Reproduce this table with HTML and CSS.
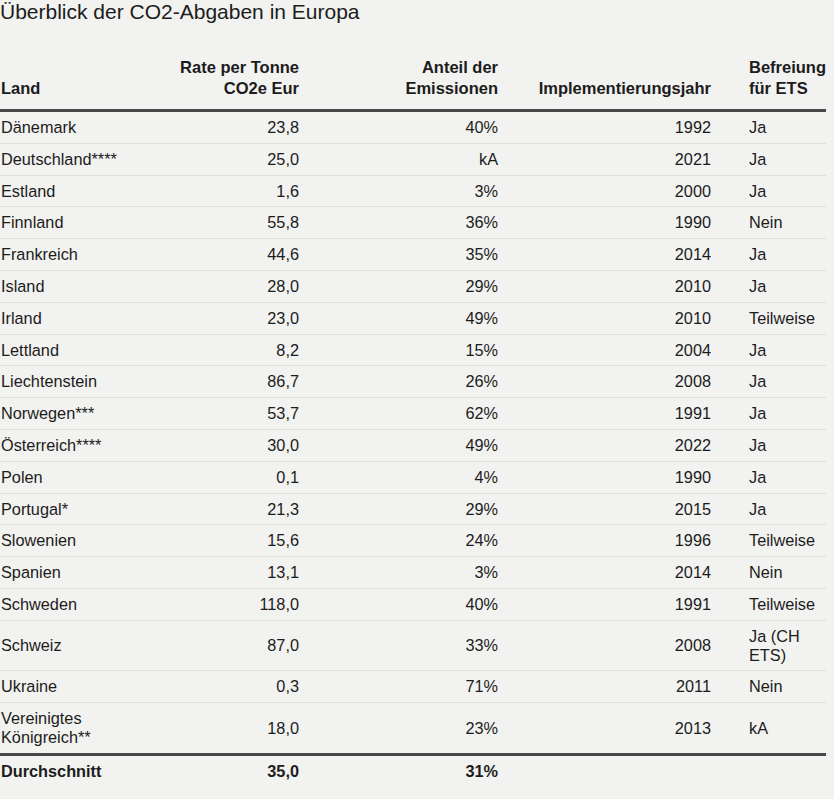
FILE: index.html
```html
<!DOCTYPE html>
<html lang="de">
<head>
<meta charset="utf-8">
<title>Überblick der CO2-Abgaben in Europa</title>
<link rel="stylesheet" href="styles.css">
</head>
<body>
<h1 class="title">Überblick der CO2-Abgaben in Europa</h1>
<table class="co2">
  <colgroup>
    <col class="c-land">
    <col class="c-rate">
    <col class="c-share">
    <col class="c-year">
    <col class="c-ets">
  </colgroup>
  <thead>
    <tr>
      <th class="land">Land</th>
      <th class="num rate">Rate per Tonne CO2e Eur</th>
      <th class="num share">Anteil der Emissionen</th>
      <th class="num year">Implementierungsjahr</th>
      <th class="ets">Befreiung für ETS</th>
    </tr>
  </thead>
  <tbody>
    <tr><td class="land">Dänemark</td><td class="num rate">23,8</td><td class="num share">40%</td><td class="num year">1992</td><td class="ets">Ja</td></tr>
    <tr><td class="land">Deutschland****</td><td class="num rate">25,0</td><td class="num share">kA</td><td class="num year">2021</td><td class="ets">Ja</td></tr>
    <tr><td class="land">Estland</td><td class="num rate">1,6</td><td class="num share">3%</td><td class="num year">2000</td><td class="ets">Ja</td></tr>
    <tr><td class="land">Finnland</td><td class="num rate">55,8</td><td class="num share">36%</td><td class="num year">1990</td><td class="ets">Nein</td></tr>
    <tr><td class="land">Frankreich</td><td class="num rate">44,6</td><td class="num share">35%</td><td class="num year">2014</td><td class="ets">Ja</td></tr>
    <tr><td class="land">Island</td><td class="num rate">28,0</td><td class="num share">29%</td><td class="num year">2010</td><td class="ets">Ja</td></tr>
    <tr><td class="land">Irland</td><td class="num rate">23,0</td><td class="num share">49%</td><td class="num year">2010</td><td class="ets">Teilweise</td></tr>
    <tr><td class="land">Lettland</td><td class="num rate">8,2</td><td class="num share">15%</td><td class="num year">2004</td><td class="ets">Ja</td></tr>
    <tr><td class="land">Liechtenstein</td><td class="num rate">86,7</td><td class="num share">26%</td><td class="num year">2008</td><td class="ets">Ja</td></tr>
    <tr><td class="land">Norwegen***</td><td class="num rate">53,7</td><td class="num share">62%</td><td class="num year">1991</td><td class="ets">Ja</td></tr>
    <tr><td class="land">Österreich****</td><td class="num rate">30,0</td><td class="num share">49%</td><td class="num year">2022</td><td class="ets">Ja</td></tr>
    <tr><td class="land">Polen</td><td class="num rate">0,1</td><td class="num share">4%</td><td class="num year">1990</td><td class="ets">Ja</td></tr>
    <tr><td class="land">Portugal*</td><td class="num rate">21,3</td><td class="num share">29%</td><td class="num year">2015</td><td class="ets">Ja</td></tr>
    <tr><td class="land">Slowenien</td><td class="num rate">15,6</td><td class="num share">24%</td><td class="num year">1996</td><td class="ets">Teilweise</td></tr>
    <tr><td class="land">Spanien</td><td class="num rate">13,1</td><td class="num share">3%</td><td class="num year">2014</td><td class="ets">Nein</td></tr>
    <tr><td class="land">Schweden</td><td class="num rate">118,0</td><td class="num share">40%</td><td class="num year">1991</td><td class="ets">Teilweise</td></tr>
    <tr><td class="land">Schweiz</td><td class="num rate">87,0</td><td class="num share">33%</td><td class="num year">2008</td><td class="ets">Ja (CH ETS)</td></tr>
    <tr><td class="land">Ukraine</td><td class="num rate">0,3</td><td class="num share">71%</td><td class="num year">2011</td><td class="ets">Nein</td></tr>
    <tr><td class="land">Vereinigtes Königreich**</td><td class="num rate">18,0</td><td class="num share">23%</td><td class="num year">2013</td><td class="ets">kA</td></tr>
  </tbody>
  <tfoot>
    <tr><td class="land">Durchschnitt</td><td class="num rate">35,0</td><td class="num share">31%</td><td class="num year"></td><td class="ets"></td></tr>
  </tfoot>
</table>
</body>
</html>
```

FILE: styles.css
```css
html, body {
  margin: 0;
  padding: 0;
  background: #f2f2f0;
}

body {
  font-family: "Liberation Sans", Arial, Helvetica, sans-serif;
  color: #1c1c1c;
}

.title {
  margin: 0;
  font-size: 21px;
  line-height: 24px;
  font-weight: normal;
  color: #1c1c1c;
}

.co2 {
  margin-top: 33px;
  width: 826px;
  table-layout: fixed;
  border-collapse: collapse;
  font-size: 16.3px;
  line-height: 18.8px;
}

.c-land { width: 160px; }
.c-rate { width: 139px; }
.c-share { width: 199px; }
.c-year { width: 213px; }
.c-ets { width: 115px; }

.co2 th,
.co2 td {
  padding: 6px 0;
  text-align: left;
  vertical-align: middle;
}

.co2 .num { text-align: right; }
.co2 .rate { padding-left: 10px; }
.co2 .share { padding-left: 80px; }
.co2 .year { padding-left: 30px; }
.co2 .ets { padding-left: 38px; }
.co2 .land { padding-left: 1px; padding-right: 10px; }

.co2 thead th {
  font-size: 16.5px;
  line-height: 21px;
  font-weight: bold;
  vertical-align: bottom;
  padding-top: 0;
  padding-bottom: 10px;
  border-bottom: 3px solid #484848;
}

.co2 tbody td {
  border-bottom: 1px solid #dedede;
}

.co2 tbody tr:last-child td {
  border-bottom: none;
}

.co2 tfoot td {
  border-top: 3px solid #484848;
  font-weight: bold;
  padding-top: 6px;
  padding-bottom: 8px;
}
```
